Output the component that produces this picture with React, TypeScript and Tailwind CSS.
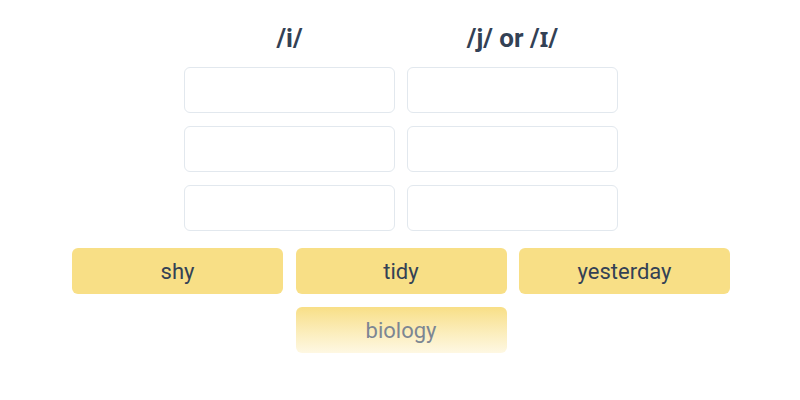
const rows = [0, 1, 2];
const words = ["shy", "tidy", "yesterday"];

export default function App() {
  return (
    <div
      className="flex h-[400px] w-[800px] flex-col items-center bg-white pt-[23px] text-[#334155]"
      style={{ fontFamily: "Roboto, 'Noto Sans', sans-serif" }}
    >
      <div className="grid grid-cols-[211px_211px] gap-x-[12px] gap-y-[13px] pl-[2px]">
        <h2 className="text-center text-[26px] leading-[31px] font-bold">/i/</h2>
        <h2 className="text-center text-[26px] leading-[31px] font-bold">/j/ or /ɪ/</h2>
        {rows.map((r) => (
          <div key={r} className="contents">
            <div className="h-[46px] rounded-[6px] border border-[#e2e8ee] bg-white" />
            <div className="h-[46px] rounded-[6px] border border-[#e2e8ee] bg-white" />
          </div>
        ))}
      </div>
      <div className="mt-[17px] grid grid-cols-[211px_211px_211px] gap-x-[12.5px] gap-y-[13px] pl-[2px]">
        {words.map((w) => (
          <div
            key={w}
            className="flex h-[46px] items-center justify-center rounded-[6px] bg-[#f8df86] text-[22px]"
          >
            {w}
          </div>
        ))}
        <div className="col-start-2 flex h-[46px] items-center justify-center rounded-[6px] bg-gradient-to-b from-[#f8df86] to-[#fef8e3] text-[22px] text-[#7c8693]">
          biology
        </div>
      </div>
    </div>
  );
}
